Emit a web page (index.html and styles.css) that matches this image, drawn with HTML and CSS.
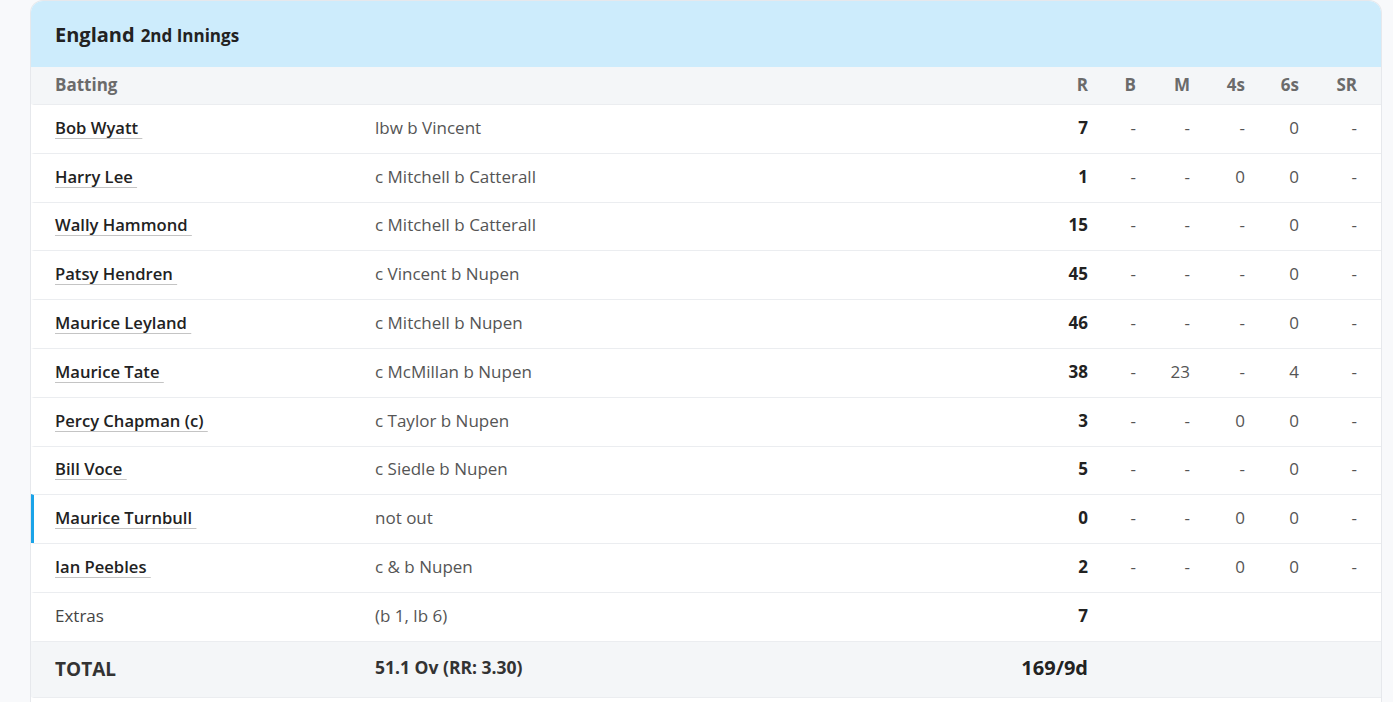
FILE: index.html
```html
<!DOCTYPE html>
<html lang="en">
<head>
    <meta charset="UTF-8">
    <meta name="viewport" content="width=device-width, initial-scale=1.0">
    <title>Scorecard</title>
    <link rel="stylesheet" href="styles.css">
</head>
<body>

<div class="card">
    <div class="card-head">
        <span class="team">England</span> <span class="inns">2nd Innings</span>
    </div>

    <div class="row head-row">
        <div class="c-name">Batting</div>
        <div class="c-how"></div>
        <div class="num">R</div>
        <div class="num">B</div>
        <div class="num">M</div>
        <div class="num">4s</div>
        <div class="num">6s</div>
        <div class="num">SR</div>
    </div>

    <div class="row">
        <div class="c-name"><a class="player">Bob Wyatt&nbsp;</a></div>
        <div class="c-how">lbw b Vincent</div>
        <div class="num runs">7</div>
        <div class="num">-</div><div class="num">-</div><div class="num">-</div><div class="num">0</div><div class="num">-</div>
    </div>
    <div class="row">
        <div class="c-name"><a class="player">Harry Lee&nbsp;</a></div>
        <div class="c-how">c Mitchell b Catterall</div>
        <div class="num runs">1</div>
        <div class="num">-</div><div class="num">-</div><div class="num">0</div><div class="num">0</div><div class="num">-</div>
    </div>
    <div class="row">
        <div class="c-name"><a class="player">Wally Hammond&nbsp;</a></div>
        <div class="c-how">c Mitchell b Catterall</div>
        <div class="num runs">15</div>
        <div class="num">-</div><div class="num">-</div><div class="num">-</div><div class="num">0</div><div class="num">-</div>
    </div>
    <div class="row">
        <div class="c-name"><a class="player">Patsy Hendren&nbsp;</a></div>
        <div class="c-how">c Vincent b Nupen</div>
        <div class="num runs">45</div>
        <div class="num">-</div><div class="num">-</div><div class="num">-</div><div class="num">0</div><div class="num">-</div>
    </div>
    <div class="row">
        <div class="c-name"><a class="player">Maurice Leyland&nbsp;</a></div>
        <div class="c-how">c Mitchell b Nupen</div>
        <div class="num runs">46</div>
        <div class="num">-</div><div class="num">-</div><div class="num">-</div><div class="num">0</div><div class="num">-</div>
    </div>
    <div class="row">
        <div class="c-name"><a class="player">Maurice Tate&nbsp;</a></div>
        <div class="c-how">c McMillan b Nupen</div>
        <div class="num runs">38</div>
        <div class="num">-</div><div class="num">23</div><div class="num">-</div><div class="num">4</div><div class="num">-</div>
    </div>
    <div class="row">
        <div class="c-name"><a class="player">Percy Chapman (c)&nbsp;</a></div>
        <div class="c-how">c Taylor b Nupen</div>
        <div class="num runs">3</div>
        <div class="num">-</div><div class="num">-</div><div class="num">0</div><div class="num">0</div><div class="num">-</div>
    </div>
    <div class="row">
        <div class="c-name"><a class="player">Bill Voce&nbsp;</a></div>
        <div class="c-how">c Siedle b Nupen</div>
        <div class="num runs">5</div>
        <div class="num">-</div><div class="num">-</div><div class="num">-</div><div class="num">0</div><div class="num">-</div>
    </div>
    <div class="row not-out">
        <div class="c-name"><a class="player">Maurice Turnbull&nbsp;</a></div>
        <div class="c-how">not out</div>
        <div class="num runs">0</div>
        <div class="num">-</div><div class="num">-</div><div class="num">0</div><div class="num">0</div><div class="num">-</div>
    </div>
    <div class="row">
        <div class="c-name"><a class="player">Ian Peebles&nbsp;</a></div>
        <div class="c-how">c &amp; b Nupen</div>
        <div class="num runs">2</div>
        <div class="num">-</div><div class="num">-</div><div class="num">0</div><div class="num">0</div><div class="num">-</div>
    </div>

    <div class="row extras">
        <div class="c-name">Extras</div>
        <div class="c-how">(b 1, lb 6)</div>
        <div class="num runs">7</div>
    </div>

    <div class="row total">
        <div class="c-name">TOTAL</div>
        <div class="c-how">51.1 Ov (RR: 3.30)</div>
        <div class="num runs">169/9d</div>
    </div>

    <div class="row foot"></div>
</div>

</body>
</html>
```

FILE: styles.css
```css
body {
    margin: 0;
    font-family: "Open Sans", "Noto Sans", sans-serif;
    background-color: #f8f9fb;
    color: #222;
}

.card {
    margin: 1px 12px 0 31px;
    background-color: #fff;
    box-shadow: 0 0 0 1px #e6e8ec;
    border-radius: 12px;
    overflow: hidden;
}

.card-head {
    background-color: #cdecfc;
    height: 66px;
    padding: 0 24px;
    display: flex;
    align-items: center;
    gap: 6px;
    color: #222;
}

.team {
    font-size: 20px;
    font-weight: 700;
}

.inns {
    font-size: 17px;
    font-weight: 700;
    padding-top: 3px;
}

.row {
    display: grid;
    grid-template-columns: 320px 1fr 60px 48px 54px 55px 54px 58px;
    align-items: center;
    height: 44.8px;
    padding: 0 24px 3px 21px;
    border-top: 1px solid #ebedf0;
    border-left: 3px solid transparent;
    font-size: 17px;
}

.head-row {
    height: 35px;
    padding-bottom: 2px;
    border-top: none;
    background-color: #f4f6f8;
    color: #6b6b6b;
    font-weight: 700;
}

.num {
    justify-self: end;
    white-space: nowrap;
    color: #555;
}

.head-row .num {
    color: #6b6b6b;
}

.runs {
    color: #222;
    font-weight: 700;
}

.c-how {
    color: #555;
}

.player {
    color: #222;
    font-size: 16.6px;
    font-weight: 600;
    text-decoration: underline;
    text-decoration-color: #c4c4c4;
    text-underline-offset: 4px;
    text-decoration-thickness: 1px;
}

.not-out {
    border-left-color: #1aa3e8;
}

.extras .c-name {
    color: #444;
}

.total {
    height: 52px;
    padding-bottom: 3px;
    background-color: #f4f6f8;
}

.total .c-name {
    font-size: 19px;
    font-weight: 700;
    color: #333;
    padding-top: 2px;
}

.total .c-how {
    font-size: 17.5px;
    font-weight: 700;
    color: #333;
    padding-bottom: 2px;
}

.total .runs {
    font-size: 20px;
    color: #222;
}

.foot {
    height: 30px;
}
```
